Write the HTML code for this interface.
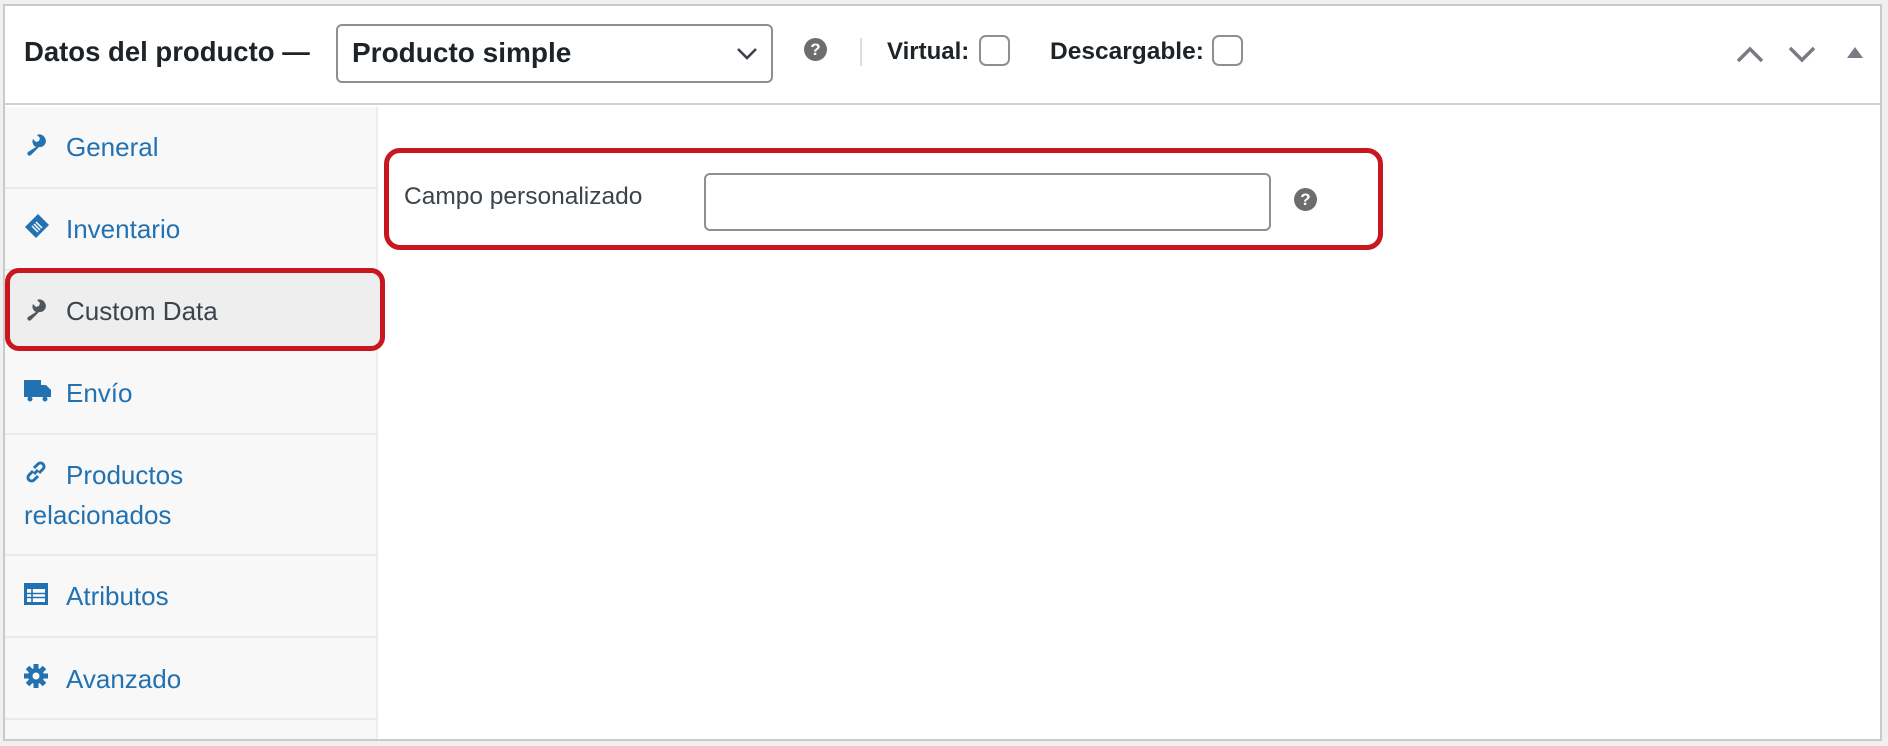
<!DOCTYPE html>
<html><head><meta charset="utf-8"><style>
*{margin:0;padding:0;box-sizing:border-box}
body{width:1888px;height:746px;background:#f0f0f1;font-family:"Liberation Sans",Arial,sans-serif;position:relative;overflow:hidden}
.abs{position:absolute}
#box{left:3px;top:4px;width:1879px;height:737px;background:#fff;border:2px solid #c9cacc}
#hdr{left:5px;top:6px;width:1875px;height:99px;border-bottom:2px solid #d0d1d3;background:#fff}
.t{white-space:nowrap}
#side{left:5px;top:107px;width:373px;height:632px;background:#f8f8f8;border-right:2px solid #eceded}
.sep{position:absolute;left:0;width:373px;height:2px;background:#e9eaeb}
.lnk{position:absolute;left:66px;font-size:26px;color:#2271b1;white-space:nowrap;line-height:30px}
.ic{position:absolute;left:24px}
.q{position:absolute;width:23px;height:23px;border-radius:50%;background:#6d6d6d;color:#fff;font-weight:bold;font-size:17px;text-align:center;line-height:23px}
.cb{position:absolute;width:31px;height:31px;border:2px solid #8c8f94;border-radius:7px;background:#fff}
</style></head><body>
<div id="box" class="abs"></div>
<div id="hdr" class="abs"></div>
<div class="abs t" style="left:24px;top:36px;font-size:27.5px;font-weight:bold;color:#1d2327;line-height:32px">Datos del producto —</div>
<div class="abs" style="left:336px;top:24px;width:437px;height:59px;border:2px solid #8c8f94;border-radius:6px;background:#fff"></div>
<div class="abs t" style="left:352px;top:37px;font-size:28px;font-weight:bold;color:#1d2327;line-height:32px">Producto simple</div>
<svg class="abs" style="left:736px;top:47px" width="22" height="14" viewBox="0 0 22 14"><path d="M2 2 L11 11 L20 2" fill="none" stroke="#3c434a" stroke-width="2.6"/></svg>
<div class="q" style="left:804px;top:38px">?</div>
<div class="abs" style="left:860px;top:38px;width:2px;height:28px;background:#dcdcde"></div>
<div class="abs t" style="left:887px;top:38px;font-size:24px;font-weight:bold;color:#1d2327;line-height:28px">Virtual:</div>
<div class="cb" style="left:979px;top:35px"></div>
<div class="abs t" style="left:1050px;top:38px;font-size:24.5px;font-weight:bold;color:#1d2327;line-height:28px">Descargable:</div>
<div class="cb" style="left:1212px;top:35px"></div>
<svg class="abs" style="left:1735px;top:45px" width="30" height="20"><path d="M3 16 L15 4 L27 16" fill="none" stroke="#787c82" stroke-width="3.5"/></svg>
<svg class="abs" style="left:1787px;top:45px" width="30" height="20"><path d="M3 3 L15 15 L27 3" fill="none" stroke="#787c82" stroke-width="3.5"/></svg>
<svg class="abs" style="left:1846px;top:47px" width="18" height="12"><path d="M9 0 L17 11 L1 11Z" fill="#787c82"/></svg>

<div id="side" class="abs">
<div class="sep" style="top:80px"></div>
<div class="sep" style="top:162px"></div>
<div class="sep" style="top:326px"></div>
<div class="sep" style="top:447px"></div>
<div class="sep" style="top:529px"></div>
<div class="sep" style="top:611px"></div>
</div>
<div class="abs" style="left:5px;top:268px;width:380px;height:83px;background:#eeeeee;border:5px solid #c8171e;border-radius:14px"></div>
<svg class="ic" style="top:133px" width="24" height="24" viewBox="0 0 24 24"><path d="M21 5 a6 6 0 0 0-8-3 l3 3-1 3-3 1-3-3 a6 6 0 0 0 3 8 L4 19 a2 2 0 0 0 3 3 l8-8 a6 6 0 0 0 6-9z" fill="#2271b1"/></svg>
<div class="lnk" style="top:132px">General</div>
<svg class="ic" style="top:213px" width="26" height="26" viewBox="0 0 26 26"><path d="M14 1 L25 12 L12 25 L1 14Z" fill="#2271b1"/><path d="M8 13 L14 19 M10 11 L16 17 M12 9 L18 15" stroke="#fff" stroke-width="1.5"/></svg>
<div class="lnk" style="top:214px">Inventario</div>
<svg class="ic" style="top:298px" width="24" height="24" viewBox="0 0 24 24"><path d="M21 5 a6 6 0 0 0-8-3 l3 3-1 3-3 1-3-3 a6 6 0 0 0 3 8 L4 19 a2 2 0 0 0 3 3 l8-8 a6 6 0 0 0 6-9z" fill="#50575e"/></svg>
<div class="lnk" style="top:296px;color:#3c434a">Custom Data</div>
<svg class="ic" style="top:380px" width="27" height="22" viewBox="0 0 27 22"><rect x="0" y="0" width="17" height="17" fill="#2271b1"/><path d="M17 5 h5 l5 5 v7 h-10z" fill="#2271b1"/><circle cx="6" cy="19" r="2.5" fill="#2271b1"/><circle cx="21" cy="19" r="2.5" fill="#2271b1"/></svg>
<div class="lnk" style="top:378px">Envío</div>
<svg class="ic" style="top:460px" width="24" height="24" viewBox="0 0 24 24"><g fill="none" stroke="#2271b1" stroke-width="3"><path d="M10 14 L14 10"/><path d="M9 11 L5 15 a3.5 3.5 0 0 0 5 5 L14 16"/><path d="M15 13 L19 9 a3.5 3.5 0 0 0-5-5 L10 8"/></g></svg>
<div class="lnk" style="top:460px">Productos</div>
<div class="lnk" style="top:500px;left:24px">relacionados</div>
<svg class="ic" style="top:583px" width="24" height="22" viewBox="0 0 24 22"><rect x="0" y="0" width="24" height="22" fill="#2271b1"/><rect x="3" y="6" width="18" height="13" fill="#fff"/><path d="M3 10.5 h18 M3 14.5 h18 M8 6 v13" stroke="#2271b1" stroke-width="1.6"/></svg>
<div class="lnk" style="top:581px">Atributos</div>
<svg class="ic" style="top:664px" width="24" height="24" viewBox="0 0 24 24"><g fill="#2271b1"><circle cx="12" cy="12" r="8"/><rect x="9.5" y="0" width="5" height="24"/><rect x="0" y="9.5" width="24" height="5"/><rect x="9.5" y="0" width="5" height="24" transform="rotate(45 12 12)"/><rect x="9.5" y="0" width="5" height="24" transform="rotate(-45 12 12)"/></g><circle cx="12" cy="12" r="3.5" fill="#f8f8f8"/></svg>
<div class="lnk" style="top:664px">Avanzado</div>

<div class="abs" style="left:384px;top:148px;width:999px;height:102px;border:5px solid #c8171e;border-radius:16px"></div>
<div class="abs t" style="left:404px;top:183px;font-size:24.5px;color:#3c434a;line-height:28px">Campo personalizado</div>
<div class="abs" style="left:704px;top:173px;width:567px;height:58px;border:2px solid #8c8f94;border-radius:6px;background:#fff"></div>
<div class="q" style="left:1294px;top:188px">?</div>
</body></html>
